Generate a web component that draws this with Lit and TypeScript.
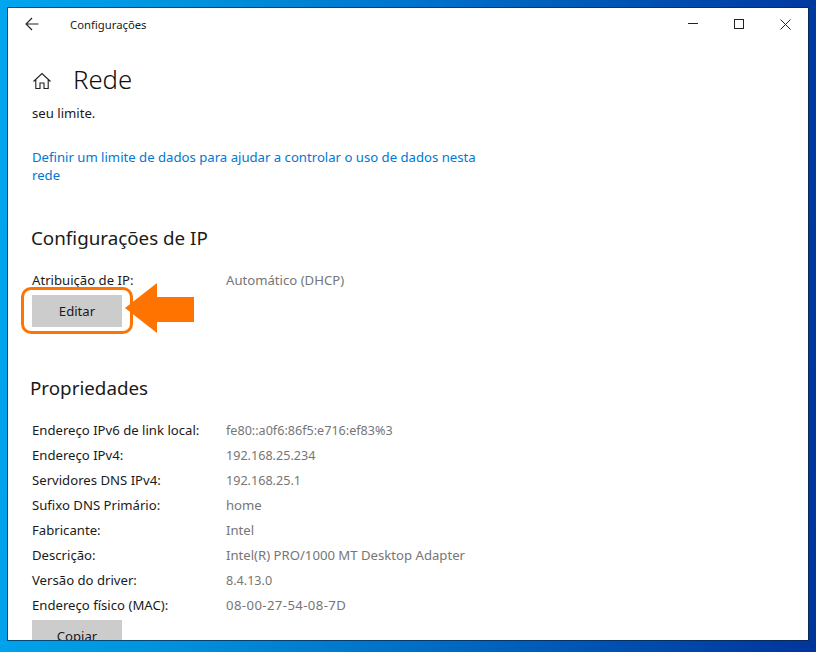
import { LitElement, html, css } from "lit";
import { customElement } from "lit/decorators.js";

const props: [string, string, string][] = [
  ["Endereço IPv6 de link local:", "fe80::a0f6:86f5:e716:ef83%3", "num"],
  ["Endereço IPv4:", "192.168.25.234", "num"],
  ["Servidores DNS IPv4:", "192.168.25.1", "num"],
  ["Sufixo DNS Primário:", "home", ""],
  ["Fabricante:", "Intel", ""],
  ["Descrição:", "Intel(R) PRO/1000 MT Desktop Adapter", ""],
  ["Versão do driver:", "8.4.13.0", "num"],
  ["Endereço físico (MAC):", "08-00-27-54-08-7D", "wide"],
];

@customElement("app-root")
export class AppRoot extends LitElement {
  static styles = css`
    :host {
      display: block;
      width: 816px;
      height: 652px;
      overflow: hidden;
      box-sizing: border-box;
      padding: 8px 8px 12px 8px;
      background: linear-gradient(93deg, #00a6ee 0%, #0090dc 25%, #0072ca 50%, #0052b2 75%, #00359c 100%);
      font-family: "Noto Sans", "Open Sans", sans-serif;
      color: #1a1a1a;
      font-size: 13.15px;
    }
    .window {
      position: relative;
      height: 632px;
      background: #fff;
      overflow: hidden;
      box-shadow: 0 0 0 1px rgba(10, 35, 65, 0.7);
    }
    .titlebar {
      height: 32px;
      display: flex;
      align-items: center;
    }
    .back {
      width: 48px;
      display: flex;
      justify-content: center;
    }
    .title {
      margin-left: 14px;
      font-size: 11.3px;
      flex: 1;
    }
    .ctl {
      width: 46px;
      height: 32px;
      display: flex;
      align-items: center;
      justify-content: center;
    }
    .head {
      display: flex;
      align-items: center;
      height: 40px;
      margin-top: 20px;
      padding-left: 24px;
    }
    .head svg { display: block; margin-top: 1px; }
    .head h1 {
      margin: 0 0 0 21px;
      font-size: 25.7px;
      font-weight: 300;
      line-height: 40px;
      color: #111;
    }
    .body { padding-left: 24px; }
    .limit { line-height: 18px; height: 18px; margin-top: 4px; }
    .link {
      color: #0078d4;
      line-height: 18px;
      width: 470px;
      margin-top: 26px;
    }
    h2 {
      margin: 0;
      font-size: 18.8px;
      font-weight: 400;
      line-height: 26px;
      color: #1a1a1a;
      margin-left: -1px;
    }
    .ip-h { margin-top: 41px; }
    .row {
      display: grid;
      grid-template-columns: 194px 1fr;
      height: 25px;
      line-height: 25px;
    }
    .row .v { color: #767676; }
    .row .num { font-size: 12.6px; }
    .row .wide { letter-spacing: 0.4px; }
    .ip-row { margin-top: 20px; height: 18px; line-height: 18px; }
    .btn {
      width: 90px;
      height: 32px;
      background: #cccccc;
      display: flex;
      align-items: center;
      justify-content: center;
      color: #1a1a1a;
    }
    .edit { position: relative; margin-top: 6px; }
    .ring {
      position: absolute;
      left: -11px;
      top: -8px;
      box-sizing: border-box;
      width: 112px;
      height: 47px;
      border: 3px solid #ff7300;
      border-radius: 10px;
    }
    .arrow { position: absolute; left: 117px; top: 275px; }
    .prop-h { margin-top: 48px; margin-left: -2px; }
    .list { margin-top: 17px; }
    .copy { margin-top: 2px; }
  `;

  render() {
    return html`
      <div class="window">
        <div class="titlebar">
          <div class="back">
            <svg width="14" height="14" viewBox="0 0 14 14" fill="none" stroke="#222" stroke-width="1.1">
              <path d="M1 7H13.5M7 1L1 7l6 6" />
            </svg>
          </div>
          <div class="title">Configurações</div>
          <div class="ctl">
            <svg width="10" height="10" viewBox="0 0 10 10" stroke="#222" stroke-width="1"><path d="M0 4.5h10" /></svg>
          </div>
          <div class="ctl">
            <svg width="10" height="10" viewBox="0 0 10 10" fill="none" stroke="#222" stroke-width="1"><rect x=".5" y=".5" width="9" height="9" /></svg>
          </div>
          <div class="ctl">
            <svg width="11" height="11" viewBox="0 0 11 11" stroke="#222" stroke-width="1"><path d="M.5.5l10 10M10.5.5l-10 10" /></svg>
          </div>
        </div>
        <div class="head">
          <svg width="20" height="18" viewBox="0 0 20 18" fill="none" stroke="#222" stroke-width="1.1">
            <path d="M1.5 9.5L10 1.5l8.5 8M3.8 7.5V16.5H8V11h4v5.5h4.2V7.5" />
          </svg>
          <h1>Rede</h1>
        </div>
        <div class="body">
          <div class="limit">seu limite.</div>
          <div class="link">Definir um limite de dados para ajudar a controlar o uso de dados nesta rede</div>
          <h2 class="ip-h">Configurações de IP</h2>
          <div class="row ip-row"><span>Atribuição de IP:</span><span class="v">Automático (DHCP)</span></div>
          <div class="btn edit">Editar<div class="ring"></div></div>
          <h2 class="prop-h">Propriedades</h2>
          <div class="list">
            ${props.map(([k, v, c]) => html`<div class="row"><span>${k}</span><span class="v ${c}">${v}</span></div>`)}
          </div>
          <div class="btn copy">Copiar</div>
        </div>
        <svg class="arrow" width="70" height="52" viewBox="0 0 70 52">
          <path d="M0 25L32 0V14H69V39H32V50Z" fill="#ff7300" />
        </svg>
      </div>
    `;
  }
}
